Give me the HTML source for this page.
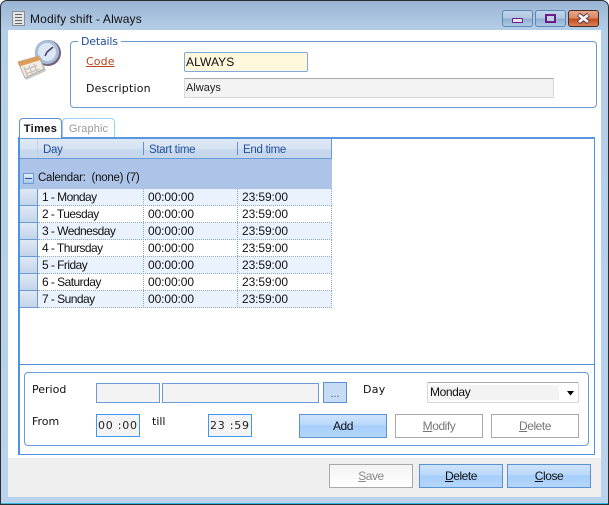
<!DOCTYPE html>
<html><head><meta charset="utf-8"><style>
html,body{margin:0;padding:0;background:#fff}
#w{position:relative;width:609px;height:505px;overflow:hidden;background:#fff;font-family:"Liberation Sans",sans-serif;font-size:12px;color:#111}
#w div{position:absolute;box-sizing:border-box;white-space:nowrap}
.t{line-height:14px}
.g{font-size:12px;line-height:17px;letter-spacing:-.1px}
.d{letter-spacing:-.55px}
.h{font-size:11.5px;letter-spacing:-.3px;color:#1f4f9f}
.btn{text-align:center;font-size:12px;line-height:23px;letter-spacing:-.45px;border:1px solid #5b92d6;background:linear-gradient(#cfe4fb 0,#b8d8fb 45%,#a6cefa 50%,#b4d6fb 100%);color:#111}
.off{border:1px solid #a8a8a8;background:#fff;color:#777}
.ind{left:20px;width:18px;height:17px;background:linear-gradient(#dfe9f5,#c3d4e9);border-bottom:1px solid #6a9ad6;border-right:1px solid #6a9ad6}
.box{background:#f3f3f3;border:1px solid #6b9bd8}
.tm{background:#f3f3f3;border:1px solid #3f97f5;font-family:"DejaVu Sans",sans-serif;font-size:11px;letter-spacing:.75px;line-height:21px;color:#222;padding-left:1px}
.l{font-family:"DejaVu Sans",sans-serif;font-size:11px;line-height:14px;color:#111}
.r{left:38px;width:294px;height:17px;border-bottom:1px dotted #8aa9d0;border-right:1px dotted #8aa9d0}
.o{background:#e9f2fd}
.e{background:#fff}
.cb{top:10px;width:31px;height:17px;border:1px solid #5c88b8;border-radius:3px;background:linear-gradient(#c0d4e9 0,#b0c8e1 50%,#8fadcf 52%,#b0cae6 100%)}
</style></head><body><div id="w">
<!-- window frame -->
<div style="left:0;top:0;width:609px;height:505px;border:1px solid #2a2f33;border-radius:7px 7px 0 0;background:linear-gradient(#9ab5d3 0,#b5cee8 30px,#bad2eb 100%)"></div>
<div style="left:8px;top:30px;width:593px;height:467px;background:#fff"></div>
<div style="left:8px;top:458px;width:593px;height:39px;background:#efefef"></div>
<div style="left:1px;top:503px;width:607px;height:1px;background:#35b7e0"></div>
<!-- title -->
<div style="left:12px;top:11px;width:13px;height:15px;background:#e4e4e4;border:1px solid #8b8b93"></div>
<div style="left:15px;top:14px;width:7px;height:1px;background:#666;box-shadow:0 3px #666,0 6px #666,0 9px #666"></div>
<div class="t" style="left:30px;top:12px;font-size:12px;letter-spacing:.15px;line-height:15px;color:#111">Modify shift - Always</div>
<!-- caption buttons -->
<div class="cb" style="left:502px"></div>
<div style="left:512px;top:18px;width:11px;height:5px;background:#e8e4f0;border:1px solid #6a1b8a;border-radius:1px"></div>
<div class="cb" style="left:535px"></div>
<div style="left:545px;top:14px;width:11px;height:9px;background:#c3d3e6;border:2px solid #6a1b8a"></div>
<div class="cb" style="left:568px;border-color:#4a2a25;background:linear-gradient(#e5a888 0,#d9875f 50%,#c7481a 52%,#d9825a 100%)"></div>
<svg style="position:absolute;left:576px;top:13px" width="15" height="11"><path d="M2.5 1.5 L12.5 9.5 M12.5 1.5 L2.5 9.5" stroke="#5a3a4a" stroke-width="4.5" fill="none"/><path d="M3 2 L12 9 M12 2 L3 9" stroke="#fff" stroke-width="2.6" fill="none"/></svg>
<!-- clock/calendar icon -->
<svg style="position:absolute;left:17px;top:39px" width="46" height="44" viewBox="0 0 46 44">
<circle cx="31" cy="14" r="13" fill="#75627f"/><circle cx="30" cy="13" r="12" fill="#a9bfd8"/><circle cx="30" cy="13" r="9" fill="#dbe7f3"/><path d="M30 13 L36 8 M30 13 L28 17" stroke="#4e3f6e" stroke-width="1.600"/>
<path d="M3 25 L24 18 L29 32 L9 41 Z" fill="#9a9a9a" opacity=".55"/>
<path d="M1 23 L22 17 L27 30 L8 39 Z" fill="#f1ece3" stroke="#b5aea5"/><path d="M1 23 L22 17 L23.500 21 L2.500 27.500 Z" fill="#dc9c5a"/>
<path d="M7 31l13-4.500M8.500 35l14-5M7 28l3.500 9M12 26.500l3.500 9M17 25l3.500 9" stroke="#c7c2ba" stroke-width="1.300"/></svg>
<!-- details -->
<div style="left:70px;top:41px;width:527px;height:67px;border:1px solid #6b9bd0;border-radius:4px"></div>
<div class="l" style="left:78px;top:35px;background:#fff;padding:0 3px;color:#1f4f9f;letter-spacing:-.2px">Details</div>
<div class="l" style="left:86px;top:55px;color:#b6431a;text-decoration:underline;letter-spacing:.1px">Code</div>
<div class="l" style="left:86px;top:82px;letter-spacing:.2px">Description</div>
<div style="left:184px;top:52px;width:124px;height:20px;background:#fff8dc;border:1px solid #7fa9da;border-radius:2px;font-size:12px;line-height:18px;padding-left:1px;letter-spacing:.1px">ALWAYS</div>
<div style="left:184px;top:78px;width:370px;height:20px;background:#f3f3f3;border:1px solid #d8d8d8;border-top-color:#aaa;font-size:11px;line-height:18px;padding-left:1px;color:#222">Always</div>
<!-- tabs -->
<div style="left:19px;top:118px;width:43px;height:20px;background:#fff;border:1px solid #5b92d6;border-bottom:0;border-radius:4px 4px 0 0;z-index:3;font-weight:bold;font-size:11px;text-align:center;line-height:20px;letter-spacing:.4px">Times</div>
<div style="left:62px;top:118px;width:53px;height:19px;background:#fff;border:1px solid #9fd0ee;border-bottom:0;border-radius:4px 4px 0 0;font-size:11px;text-align:center;line-height:20px;color:#9a9a9a;letter-spacing:.1px">Graphic</div>
<!-- main panel -->
<div style="left:18px;top:137px;width:577px;height:318px;border:1px solid #4f92e0;border-top:2px solid #5b97dc;border-left-width:2px"></div>
<div style="left:19px;top:364px;width:575px;height:1px;background:#4f92e0"></div>
<!-- grid header -->
<div style="left:20px;top:139px;width:312px;height:20px;background:linear-gradient(#dfe9f5 0,#d6e3f2 50%,#c6d7ec 60%,#c6d7ec 100%);border-right:1px solid #6a9ad6;border-bottom:1px solid #6a9ad6"></div>
<div style="left:37px;top:139px;width:1px;height:19px;background:#c0d0e6"></div>
<div style="left:143px;top:142px;width:1px;height:13px;background:#6a8fc4"></div>
<div style="left:237px;top:142px;width:1px;height:13px;background:#6a8fc4"></div>
<div class="g h" style="left:43px;top:142px">Day</div>
<div class="g h" style="left:149px;top:142px">Start time</div>
<div class="g h" style="left:243px;top:142px">End time</div>
<!-- group row -->
<div style="left:20px;top:159px;width:312px;height:30px;background:#adc3e8"></div>
<div style="left:23px;top:173px;width:11px;height:11px;background:linear-gradient(#e4effa,#a9c8ec);border:1px solid #6a9ad6"></div>
<div style="left:25px;top:178px;width:7px;height:1px;background:#1f4f9f"></div>
<div class="g" style="left:38px;top:170px;font-size:11.5px;letter-spacing:-.25px">Calendar:&nbsp; (none) (7)</div>
<!-- rows -->
<div class="r o" style="top:189px"></div>
<div class="r e" style="top:206px"></div>
<div class="r o" style="top:223px"></div>
<div class="r e" style="top:240px"></div>
<div class="r o" style="top:257px"></div>
<div class="r e" style="top:274px"></div>
<div class="r o" style="top:291px"></div>
<div style="left:143px;top:189px;width:1px;height:119px;border-left:1px dotted #8aa9d0"></div>
<div style="left:237px;top:189px;width:1px;height:119px;border-left:1px dotted #8aa9d0"></div>
<div class="ind" style="top:189px"></div><div class="ind" style="top:206px"></div><div class="ind" style="top:223px"></div><div class="ind" style="top:240px"></div><div class="ind" style="top:257px"></div><div class="ind" style="top:274px"></div><div class="ind" style="top:291px"></div>
<div class="g d" style="left:42px;top:189px">1 - Monday</div><div class="g" style="left:148px;top:189px">00:00:00</div><div class="g" style="left:242px;top:189px">23:59:00</div>
<div class="g d" style="left:42px;top:206px">2 - Tuesday</div><div class="g" style="left:148px;top:206px">00:00:00</div><div class="g" style="left:242px;top:206px">23:59:00</div>
<div class="g d" style="left:42px;top:223px">3 - Wednesday</div><div class="g" style="left:148px;top:223px">00:00:00</div><div class="g" style="left:242px;top:223px">23:59:00</div>
<div class="g d" style="left:42px;top:240px">4 - Thursday</div><div class="g" style="left:148px;top:240px">00:00:00</div><div class="g" style="left:242px;top:240px">23:59:00</div>
<div class="g d" style="left:42px;top:257px">5 - Friday</div><div class="g" style="left:148px;top:257px">00:00:00</div><div class="g" style="left:242px;top:257px">23:59:00</div>
<div class="g d" style="left:42px;top:274px">6 - Saturday</div><div class="g" style="left:148px;top:274px">00:00:00</div><div class="g" style="left:242px;top:274px">23:59:00</div>
<div class="g d" style="left:42px;top:291px">7 - Sunday</div><div class="g" style="left:148px;top:291px">00:00:00</div><div class="g" style="left:242px;top:291px">23:59:00</div>
<!-- lower group -->
<div style="left:24px;top:372px;width:565px;height:74px;border:1px solid #6b9bd8;border-radius:4px"></div>
<div class="l" style="left:32px;top:383px">Period</div>
<div class="l" style="left:32px;top:415px">From</div>
<div class="l" style="left:152px;top:415px">till</div>
<div class="l" style="left:363px;top:383px;letter-spacing:.3px">Day</div>
<div class="box" style="left:96px;top:383px;width:64px;height:20px"></div>
<div class="box" style="left:162px;top:383px;width:157px;height:20px"></div>
<div style="left:323px;top:382px;width:24px;height:21px;background:#c6dcf5;border:1px solid #5b92d6;text-align:center;font-size:11px;line-height:23px;color:#3a5a8a">...</div>
<div style="left:427px;top:382px;width:152px;height:21px;background:#fff;border:1px solid #d5d5d5;border-top-color:#aaa;border-radius:2px"></div>
<div style="left:430px;top:385px;width:129px;height:15px;background:#f3f3f3;font-size:12px;line-height:15px;letter-spacing:-.4px">Monday</div>
<svg style="position:absolute;left:567px;top:391px" width="8" height="5"><path d="M0 0H7L3.500 4.500Z" fill="#000"/></svg>
<div class="tm" style="left:96px;top:414px;width:44px;height:23px">00 :00</div>
<div class="tm" style="left:208px;top:414px;width:44px;height:23px">23 :59</div>
<div class="btn" style="left:299px;top:414px;width:88px;height:24px">Add</div>
<div class="btn off" style="left:395px;top:414px;width:88px;height:24px"><u>M</u>odify</div>
<div class="btn off" style="left:491px;top:414px;width:88px;height:24px"><u>D</u>elete</div>
<!-- bottom buttons -->
<div class="btn off" style="left:329px;top:464px;width:84px;height:24px;background:linear-gradient(#f3f3f3,#fff);color:#888"><u>S</u>ave</div>
<div class="btn" style="left:419px;top:464px;width:84px;height:24px"><u>D</u>elete</div>
<div class="btn" style="left:507px;top:464px;width:84px;height:24px"><u>C</u>lose</div>
</div></body></html>
